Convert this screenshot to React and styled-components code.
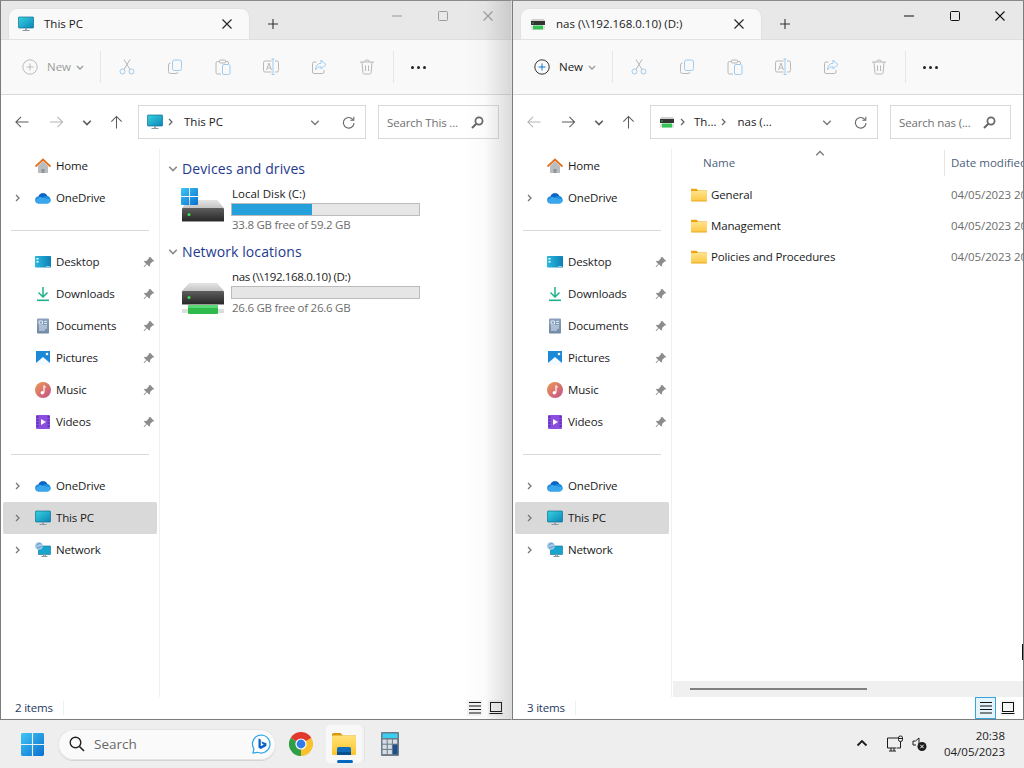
import React from "react";
import styled, { createGlobalStyle } from "styled-components";

const Global = createGlobalStyle`
  html, body { margin: 0; padding: 0; height: 768px; overflow: hidden; background: #eeeeee; }
  body { font-family: "Open Sans", "Noto Sans", "Liberation Sans", sans-serif; font-size: 11.5px; color: #1a1a1a; }
  * { box-sizing: border-box; }
`;

const Desktop = styled.div`display: flex; flex-direction: column; width: 1024px; height: 768px; overflow: hidden;`;
const Windows = styled.div`display: flex; height: 720px;`;
const WindowFrame = styled.section`
  position: relative; width: 512px; height: 720px; display: flex; flex-direction: column;
  background: #fff; border-left: 1px solid #7c7c7c; border-top: 1px solid #8a8a8a; border-bottom: 1px solid #7c7c7c;
  border-right: 1px solid ${p => (p.$active ? "#7c7c7c" : "#dcdcdc")};
  overflow: hidden;
`;
const EdgeShadow = styled.div`
  position: absolute; top: 0; right: 0; bottom: 0; width: 48px; pointer-events: none;
  background: linear-gradient(to right, rgba(120,120,120,0), rgba(120,120,120,0.03) 45%, rgba(120,120,120,0.26));
`;
const TabStrip = styled.div`display: flex; height: 39px; background: #e8e8e8; flex: none; box-shadow: inset 0 -1px 0 #dedede;`;
const Tab = styled.div`
  display: flex; align-items: center; width: 240px; height: 30px; margin: 8px 0 0 8px; padding-left: 9px;
  background: #f9f9f9; border-radius: 8px 8px 0 0; box-shadow: 0 0 0 1px #e2e2e2;
`;
const TabTitle = styled.span`margin-left: 10px; flex: 1; white-space: nowrap; padding-bottom: 1px;`;
const TabClose = styled.span`display: flex; width: 12px; margin-right: 16px; color: #222;`;
const NewTab = styled.div`display: flex; align-items: center; justify-content: center; width: 48px; height: 30px; margin-top: 8px; color: #333;`;
const Controls = styled.div`display: flex; margin-left: auto; height: 30px; color: ${p => (p.$active ? "#111" : "#9a9a9a")};`;
const Control = styled.div`display: flex; align-items: center; justify-content: center; width: 45.6px; height: 30px;`;

const Toolbar = styled.div`display: flex; align-items: center; height: 55px; flex: none; background: #f9f9f9; border-bottom: 1px solid #d9d9d9;`;
const NewButton = styled.div`
  display: flex; align-items: center; width: 99px; padding-left: 21px; height: 32px;
  color: ${p => (p.$active ? "#1a1a1a" : "#9c9c9c")};
`;
const NewLabel = styled.span`margin-left: 9px; padding-bottom: 1px;`;
const NewCaret = styled.span`display: flex; margin-left: 5px; color: #9a9a9a;`;
const ToolSep = styled.div`width: 1px; height: 32px; background: #e7e7e7; margin-right: ${p => p.$gap || 0}px; margin-left: ${p => p.$left || 0}px;`;
const ToolButton = styled.div`display: flex; align-items: center; justify-content: center; width: 48px; height: 32px;`;
const Dots = styled.div`display: flex; gap: 3px; margin-left: 17px;`;
const Dot = styled.i`width: 3px; height: 3px; background: #222; border-radius: 50%;`;

const NavRow = styled.div`display: flex; align-items: center; height: 54px; flex: none; padding-left: 4px;`;
const NavButton = styled.div`display: flex; align-items: center; justify-content: center; height: 20px; width: ${p => p.$w}px; color: ${p => (p.$off ? "#b4b4b4" : "#5a5a5a")};`;
const AddressBar = styled.div`
  display: flex; align-items: center; width: 228px; height: 34px; margin-left: 4px; padding-left: 8px;
  border: 1px solid #d9d9d9; background: #fff;
`;
const Crumb = styled.span`white-space: nowrap; color: #1a1a1a; margin-left: ${p => p.$ml || 0}px; padding-bottom: 1px;`;
const CrumbSep = styled.span`display: flex; color: #666; margin-left: ${p => p.$ml || 0}px;`;
const AddressEnd = styled.div`display: flex; align-items: center; margin-left: auto; color: #777;`;
const AddressCaret = styled.span`display: flex; margin-right: 22px; color: #777;`;
const Refresh = styled.span`display: flex; margin-right: 10px; color: #6a6a6a;`;
const SearchBox = styled.div`
  display: flex; align-items: center; justify-content: space-between; width: 121px; height: 34px; margin-left: 12px;
  padding: 0 14px 0 8px; border: 1px solid #d9d9d9; color: #707070; letter-spacing: -0.15px; white-space: nowrap;
`;
const Mag = styled.span`display: flex; color: #666;`;

const Body = styled.div`display: flex; flex: 1; min-height: 0;`;
const Sidebar = styled.nav`width: 159px; flex: none; padding: 1px 2px 0 2px; border-right: 1px solid #f0f0f0;`;
const SideRow = styled.div`
  display: flex; align-items: center; height: 32px; border-radius: 2px; width: 154px;
  background: ${p => (p.$selected ? "#d9d9d9" : "transparent")};
`;
const Expander = styled.span`display: flex; justify-content: center; width: 28px; color: #777;`;
const SideIcon = styled.span`display: flex; width: 16px; margin-left: 4px;`;
const SideLabel = styled.span`margin-left: 5px; flex: 1; letter-spacing: -0.15px; white-space: nowrap; padding-bottom: 1px;`;
const Pin = styled.span`display: flex; margin-right: 2px; color: #8c8c8c;`;
const SideSep = styled.div`height: 1px; width: 138px; margin: 16px 0 15px 8px; background: #d9d9d9;`;

const Content = styled.main`position: relative; flex: 1; min-width: 0; display: flex; flex-direction: column; overflow: hidden;`;
const GroupHead = styled.h2`
  display: flex; align-items: center; height: 20px; margin: ${p => p.$top}px 0 7px 8px; padding-bottom: 2px; font-weight: 400; font-size: 14px;
  color: #1e3a8f; letter-spacing: 0.1px;
`;
const GroupCaret = styled.span`display: flex; width: 14px; color: #8a8a8a;`;
const DriveTile = styled.div`display: flex; margin-left: 21px;`;
const DriveIcon = styled.div`position: relative; width: 51px; flex: none; padding-left: 1px; padding-top: 14px;`;
const DriveLogo = styled.div`position: absolute; left: 0; top: 2px;`;
const DriveName = styled.div`height: 16px; line-height: 16px; letter-spacing: ${p => (p.$tight ? "-0.33px" : "0")};`;
const DriveBar = styled.div`width: 189px; height: 13px; margin: 1px 0 1px -1px; background: #e6e6e6; border: 1px solid #bcbcbc;`;
const DriveFill = styled.div`height: 100%; background: #26a0da;`;
const DriveFree = styled.div`height: 16px; line-height: 16px; color: #6d6d6d; letter-spacing: -0.26px;`;

const Header = styled.div`display: grid; grid-template-columns: 273px 1fr; height: 26px; margin-top: 1px; line-height: 26px; flex: none; color: #4c607a;`;
const NameHead = styled.div`padding-left: 31px; border-right: 1px solid #e5e5e5;`;
const DateHead = styled.div`padding-left: 6px; white-space: nowrap;`;
const SortMark = styled.span`position: absolute; left: 143px; top: 0; color: #777; display: flex;`;
const FileList = styled.div`flex: 1; padding-top: 3px;`;
const FileRow = styled.div`display: grid; grid-template-columns: 273px 1fr; height: 31px; align-items: center;`;
const FileName = styled.div`display: flex; align-items: center; padding-left: 19px; letter-spacing: -0.15px;`;
const FileLabel = styled.span`margin-left: 4px;`;
const FileDate = styled.div`padding-left: 6px; color: #6d6d6d; white-space: nowrap; letter-spacing: -0.1px;`;
const HScroll = styled.div`height: 16px; margin-left: 1px; background: #f0f0f0; flex: none; padding: 7px 0 0 17px;`;
const HThumb = styled.div`width: 177px; height: 2px; background: #808080;`;

const Status = styled.footer`display: flex; align-items: center; height: 22px; flex: none; padding-left: 14px; color: #1f3a5f;`;
const StatusCount = styled.span`width: 49px; border-right: 1px solid #efefef; line-height: 14px; letter-spacing: -0.2px;`;
const ViewGroup = styled.div`display: flex; margin-left: auto; margin-right: 8px; height: 22px; gap: 6px; align-items: center;`;
const ViewButton = styled.div`
  display: flex; align-items: center; justify-content: center; width: ${p => (p.$on ? 21 : 15)}px; height: ${p => (p.$on ? 22 : 16)}px; color: #111;
  margin-right: ${p => (p.$on ? -2 : 0)}px;
  background: ${p => (p.$on ? "#e5f3fb" : "#f4f4f4")}; border: ${p => (p.$on ? "1px solid #36a5de" : "none")};
`;
const CursorMark = styled.div`position: absolute; right: 0; top: 495px; width: 1px; height: 16px; background: #111;`;

const Taskbar = styled.footer`display: flex; align-items: center; height: 48px; background: #eeeeee; padding-left: 21px;`;
const StartIcon = styled.div`display: flex; margin-right: 14px;`;
const SearchPill = styled.div`
  display: flex; align-items: center; width: 218px; height: 31px; border-radius: 16px; background: #fafafa;
  box-shadow: inset 0 0 0 1px #e4e4e4, 0 1px 0 #d4d4d4; padding: 0 5px 0 11px; font-size: 13.5px; color: #686868;
`;
const PillText = styled.span`margin-left: 9px; flex: 1; padding-bottom: 1px;`;
const AppSlot = styled.div`display: flex; align-items: center; justify-content: center; margin-left: ${p => p.$ml}px;`;
const ActiveApp = styled.div`
  position: relative; display: flex; justify-content: center; padding-top: 8px; width: 35px; height: 38px; margin-left: 13px;
  background: #f8f8f8; border-radius: 4px; box-shadow: 3px 0 0 0 #f3f3f3, 4px 0 0 0 #e2e2e2;
`;
const Indicator = styled.i`position: absolute; left: 11px; bottom: 0; width: 16px; height: 3px; border-radius: 2px; background: #0067c0;`;
const Tray = styled.div`display: flex; align-items: center; margin-left: auto; padding-right: 19px; color: #1c1c1c;`;
const TrayIcon = styled.span`display: flex; margin-right: ${p => p.$mr}px;`;
const Clock = styled.div`text-align: right; line-height: 16px; color: #1c1c1c;`;

/* ---------- icons ---------- */
const Svg = ({ s = 16, w, h, vb, children }) => (
  <svg width={w || s} height={h || s} viewBox={vb || `0 0 ${w || s} ${h || s}`} fill="none" style={{ display: "block", flex: "none" }}>{children}</svg>
);
const Chev = ({ dir = "right", s = 8, c = "currentColor", sw = 1.3 }) => {
  const d = { right: "M3 1l3 3-3 3", down: "M1 3l3 3 3-3", up: "M1 5l3-3 3 3" }[dir];
  return <Svg s={s} vb="0 0 8 8"><path d={d} stroke={c} strokeWidth={sw} /></Svg>;
};
const XIcon = ({ s = 12, sw = 1.1 }) => <Svg s={s} vb="0 0 12 12"><path d="M1.5 1.5l9 9M10.5 1.5l-9 9" stroke="currentColor" strokeWidth={sw} /></Svg>;
const PCIcon = ({ s = 16 }) => (
  <Svg s={s} vb="0 0 16 16">
    <defs><linearGradient id="pcg" x1="0" y1="0" x2="1" y2="1"><stop offset="0" stopColor="#38d2de" /><stop offset="1" stopColor="#0a86b8" /></linearGradient></defs>
    <rect x="0.5" y="1" width="15" height="11" rx="0.6" fill="url(#pcg)" stroke="#0f6f95" strokeWidth="0.7" />
    <path d="M7 12h2v2H7z" fill="#9aa7b0" /><path d="M4.5 14h7v1h-7z" fill="#8a98a2" />
  </Svg>
);
const HardDrive = ({ net }) => (
  <Svg w={42} h={net ? 31 : 22} vb={`0 0 42 ${net ? 31 : 22}`}>
    <defs>
      <linearGradient id="hdt" x1="0" y1="0" x2="0" y2="1"><stop offset="0" stopColor="#e4e4e4" /><stop offset="1" stopColor="#c4c4c4" /></linearGradient>
      <linearGradient id="hdb" x1="0" y1="0" x2="0" y2="1"><stop offset="0" stopColor="#5e5e5e" /><stop offset="1" stopColor="#252525" /></linearGradient>
    </defs>
    <path d="M7 0h28l7 8H0z" fill="url(#hdt)" />
    <rect x="0" y="8" width="42" height="14" rx="1" fill="url(#hdb)" />
    <rect y="21" width="42" height="1" fill="#9a9a9a" />
    <circle cx="7" cy="14.5" r="1.5" fill="#39e04f" />
    {net && <><rect x="0" y="26" width="42" height="4" fill="#dcdedc" /><rect x="6" y="22" width="30" height="9" rx="1" fill="#2fbb4c" /><rect x="6" y="22" width="30" height="3" fill="#5ad874" /></>}
  </Svg>
);
const NasTab = () => (
  <Svg s={16} vb="0 0 16 16">
    <path d="M2 3h12l1 2H1z" fill="#d0d0d0" /><rect x="1" y="5" width="14" height="4" fill="#333" /><circle cx="3" cy="7" r=".7" fill="#3ddc58" />
    <rect x="1" y="10" width="14" height="3.5" fill="#ddd" /><rect x="3" y="9.5" width="10" height="4" fill="#36c455" />
  </Svg>
);
const WinLogo = ({ s = 24 }) => (
  <Svg s={s} vb="0 0 24 24">
    <defs><linearGradient id="wl" x1="0" y1="0" x2="1" y2="1"><stop offset="0" stopColor="#3fc6f5" /><stop offset="1" stopColor="#0a6fcf" /></linearGradient></defs>
    <path d="M0 1.5A1.5 1.5 0 0 1 1.5 0H11.4v11.4H0zM12.6 0h9.9A1.5 1.5 0 0 1 24 1.5v9.9H12.6zM0 12.6h11.4V24H1.5A1.5 1.5 0 0 1 0 22.5zM12.6 12.6H24v9.9a1.5 1.5 0 0 1-1.5 1.5h-9.9z" fill="url(#wl)" />
  </Svg>
);
const Home = () => (<Svg><path d="M3 8v7h10V8L8 3z" fill="#b9bcc0" /><path d="M6.5 15v-4h3v4z" fill="#8f9296" /><path d="M.5 8.5L8 1.5l7.5 7" stroke="#e2701c" strokeWidth="1.8" /></Svg>);
const Cloud = () => (<Svg><path d="M4 13.5a3.5 3.5 0 0 1-.6-7 4.8 4.8 0 0 1 9-.4 3.7 3.7 0 0 1 3 3.7 3.7 3.7 0 0 1-3.4 3.7z" fill="#1f8ce0" /><path d="M3.5 8.2c2-1.6 4-1.6 6 0l6.4 1.2a3.7 3.7 0 0 1-3.5 4.1H4a3.5 3.5 0 0 1-3.3-3.5z" fill="#3aa7ec" /><path d="M3.4 6.5a4.8 4.8 0 0 1 9-.4c-2-.3-3.8.5-4.6 1.6C6.5 6.8 5 6.4 3.4 6.5z" fill="#0c64c0" /></Svg>);
const Desk = () => (<Svg><defs><linearGradient id="dk" x1="0" y1="0" x2="1" y2="0"><stop offset="0" stopColor="#29b9de" /><stop offset="1" stopColor="#0d7fb5" /></linearGradient></defs><rect y="2" width="16" height="11.5" rx=".8" fill="url(#dk)" /><path d="M1.5 4h2v1.5h-2zM1.5 7h2v1.5h-2z" fill="#fff" /><path d="M11 12.3h4v.6h-4z" fill="#d6f2fa" /></Svg>);
const Down = () => (<Svg><path d="M8 1v9.5M3.5 6.5L8 11l4.5-4.5" stroke="#20b08a" strokeWidth="1.5" /><path d="M2 14.3h12" stroke="#20b08a" strokeWidth="1.6" /></Svg>);
const Docs = () => (<Svg><defs><linearGradient id="dc" x1="0" y1="0" x2="0" y2="1"><stop offset="0" stopColor="#8aa2bd" /><stop offset="1" stopColor="#6f8aa8" /></linearGradient></defs><rect x="2" y="0.5" width="12" height="15" rx=".8" fill="url(#dc)" /><path d="M4 3h3.5v3H4zM9 3.4h3M9 5.6h3M4 8h8M4 10h8M4 12h6" stroke="#eef3f8" strokeWidth=".9" /></Svg>);
const Pics = () => (<Svg><rect x="1" y="1" width="14" height="14" fill="#1b88d8" /><path d="M1 13l7-6 7 6v2H1z" fill="#f4faff" /><circle cx="12" cy="4" r="1.3" fill="#fff" /></Svg>);
const Music = () => (<Svg><defs><linearGradient id="mu" x1="0" y1="0" x2="1" y2="1"><stop offset="0" stopColor="#ef9a52" /><stop offset="1" stopColor="#c2508a" /></linearGradient></defs><circle cx="8" cy="8" r="8" fill="url(#mu)" /><path d="M9 3.5v7.2" stroke="#fff" strokeWidth="1.2" /><circle cx="7.3" cy="10.7" r="1.7" fill="#fff" /><path d="M9 3.5c.4 1.4 1.4 1.6 2 2" stroke="#fff" strokeWidth="1" /></Svg>);
const Video = () => (<Svg><rect x="1" y="1" width="14" height="14" rx="1" fill="#8b4fe0" /><path d="M1.5 3h2M1.5 6h2M1.5 9h2M1.5 12h2M12.5 3h2M12.5 6h2M12.5 9h2M12.5 12h2" stroke="#3b1a86" strokeWidth="1" /><path d="M6 5l5 3-5 3z" fill="#fff" /></Svg>);
const Net = () => (<Svg><rect x="3.5" y="4" width="12" height="8.5" fill="#17a5cf" stroke="#0f6f95" strokeWidth=".6" /><path d="M8.5 12.5h2V14h-2zM6.5 14.5h6" stroke="#8a98a2" strokeWidth="1" /><circle cx="4" cy="4" r="3.8" fill="#9ec6e6" /><path d="M1.5 3.5c1-1.5 3-2.5 4-2M2 6c1.5-.5 3-.5 4.5-1.5" stroke="#3f7fb8" strokeWidth=".7" /></Svg>);
const PinIcon = () => (<Svg s={12} vb="0 0 12 12"><path d="M7 .8l4.2 4.2-1 .8-.8-.2L7 8.2l.1 1.5-.9.9-2.3-2.3-2.7 2.9-.6-.6L3.3 7.9 1 5.700l.9-.9 1.5.1 2.5-2.4-.2-.8z" fill="currentColor" /></Svg>);
const Folder = () => (
  <Svg w={16} h={16} vb="0 0 16 16">
    <defs><linearGradient id="fd" x1="0" y1="0" x2="0" y2="1"><stop offset="0" stopColor="#ffe28a" /><stop offset="1" stopColor="#fbc946" /></linearGradient></defs>
    <path d="M0 2.5A.8.8 0 0 1 .8 1.7h4.7L7.3 3.5H16v3H0z" fill="#eda40f" /><rect y="4" width="16" height="10" rx=".8" fill="url(#fd)" /><path d="M0 13.4h16v.4a.6.6 0 0 1-.6.6H.6a.6.6 0 0 1-.6-.6z" fill="#e9a820" />
  </Svg>
);
const bl = "#9fccf0", gr = "#b8b8b8";
const Cut = () => <Svg s={16}><circle cx="3.5" cy="12.5" r="2.5" stroke={bl} /><circle cx="12.5" cy="12.5" r="2.5" stroke={bl} /><path d="M5 10.500L11 .5M11 10.500L5 .5" stroke={gr} /></Svg>;
const CopyI = () => <Svg s={16}><rect x="5.5" y="1" width="9" height="10.5" rx="2" stroke={bl} /><path d="M3.5 4A2 2 0 0 0 1.5 6v6.5a2 2 0 0 0 2 2h5.5a2 2 0 0 0 2-1.5" stroke={gr} /></Svg>;
const Paste = () => <Svg s={16}><path d="M4.5 2.5H2.500A1.500 1.500 0 0 0 1 4v9.500A1.500 1.500 0 0 0 2.500 15H6M10.500 2.500h1.500A1.500 1.500 0 0 1 13.500 4v1" stroke={gr} /><rect x="4.5" y="1" width="6" height="3" rx="1" stroke={gr} /><rect x="7.5" y="5.5" width="7.5" height="10" rx="1.5" stroke={bl} /></Svg>;
const Rename = () => <Svg w={18} h={18} vb="0 0 18 18"><path d="M9.5 3H3a1.5 1.5 0 0 0-1.5 1.5v8A1.5 1.5 0 0 0 3 14h6.5M13 3h2a1.5 1.5 0 0 1 1.5 1.5v8A1.5 1.5 0 0 1 15 14h-2" stroke={gr} /><path d="M4.5 12l2.5-7 2.5 7M5.3 10h3.500" stroke={gr} /><path d="M9.5 1h3M11 1v15M9.5 16.500h3" stroke={bl} /></Svg>;
const Share = () => <Svg s={16}><path d="M5.5 3H3a1.5 1.5 0 0 0-1.5 1.5V13A1.5 1.5 0 0 0 3 14.5h8.500A1.500 1.500 0 0 0 13 13v-2" stroke={gr} /><path d="M10 1l5 4.500-5 4.500V7.700c-2.500 0-4.300 1-5.500 3.300 0-4 2-6.500 5.500-6.800z" stroke={bl} /></Svg>;
const Trash = () => <Svg s={16}><path d="M1 3h14M5.500 3c0-1.300.8-2 2.500-2s2.500.7 2.500 2M3 3l.9 10.700A1.500 1.500 0 0 0 5.400 15h5.200a1.500 1.500 0 0 0 1.500-1.300L13 3M6.500 6.500v5.500M9.500 6.500v5.500" stroke={gr} /></Svg>;
const Plus = ({ c, b }) => <Svg s={16}><circle cx="8" cy="8" r="7.2" stroke={c} strokeWidth="1" /><path d="M8 4.5v7M4.5 8h7" stroke={b} strokeWidth="1" /></Svg>;
const Arrow = ({ dir = "left" }) => {
  const d = { left: "M15 7.5H1.5M7 2L1.5 7.5 7 13", right: "M0.5 7.5H14M8.5 2L14 7.5 8.5 13", up: "M7.5 14.5V1.5M2 7l5.5-5.5L13 7" }[dir];
  return <Svg s={15} vb="0 0 15 16"><path d={d} stroke="currentColor" strokeWidth="1.1" /></Svg>;
};
const RefreshI = () => <Svg s={13} vb="0 0 13 13"><path d="M11.2 4A5.3 5.3 0 1 0 12 7" stroke="currentColor" strokeWidth="1.1" /><path d="M11.8 .8v3.5H8.3" stroke="currentColor" strokeWidth="1.1" /></Svg>;
const MagI = () => <Svg s={13} vb="0 0 13 13"><circle cx="8" cy="5" r="3.6" stroke="currentColor" strokeWidth="1.7" /><path d="M5.3 7.7L1 12" stroke="currentColor" strokeWidth="2" /></Svg>;
const TileI = () => <Svg s={14} vb="0 0 14 14"><rect x="1.5" y="1.5" width="11" height="9" stroke="currentColor" /><path d="M.5 12.5h13" stroke="currentColor" /></Svg>;
const ListI = () => <Svg s={14} vb="0 0 14 14"><path d="M1 1.5h12M1 5h12M1 8.5h12M1 12h12" stroke="currentColor" /></Svg>;

/* taskbar art */
const Chrome = () => (
  <Svg s={24} vb="0 0 24 24">
    <path d="M12 12L1.6 6A12 12 0 0 1 22.4 6z" fill="#e2372c" />
    <path d="M12 12L22.4 6A12 12 0 0 1 12 24z" fill="#fbc02d" />
    <path d="M12 12L12 24A12 12 0 0 1 1.6 6z" fill="#2f9e44" />
    <circle cx="12" cy="12" r="5.6" fill="#fff" /><circle cx="12" cy="12" r="4.4" fill="#2f7ce8" />
  </Svg>
);
const ExplorerArt = () => (
  <Svg w={24} h={22} vb="0 0 24 22">
    <defs><linearGradient id="ex" x1="0" y1="0" x2="0" y2="1"><stop offset="0" stopColor="#ffe27a" /><stop offset="1" stopColor="#fcc428" /></linearGradient></defs>
    <path d="M0 1.5A1.5 1.5 0 0 1 1.5 0h7l2.5 2.5h13V8H0z" fill="#d9980c" />
    <rect y="2.5" width="24" height="19.5" rx="1" fill="url(#ex)" />
    <rect x="5" y="14" width="14" height="8" rx="1.5" fill="#0f6cbd" /><rect x="5" y="19" width="14" height="3" fill="#0a4f8f" />
  </Svg>
);
const Calc = () => (
  <Svg w={18} h={24} vb="0 0 18 24">
    <rect width="18" height="24" rx="1" fill="#6b7a88" /><rect x="1.5" y="1.5" width="15" height="4.5" fill="#39d0ef" />
    {[0, 1, 2].flatMap(r => [0, 1, 2].map(c => (c === 2 && r > 0 ? null : <rect key={`${r}${c}`} x={1.5 + c * 5.2} y={7.5 + r * 5.2} width="4.2" height="4.2" fill="#d6dde3" />)))}
    <rect x="11.9" y="12.7" width="4.6" height="9.6" fill="#1d4f8c" />
  </Svg>
);
const Bing = () => (
  <Svg s={20} vb="0 0 20 20">
    <path d="M10 1a9 9 0 1 1-3.5 17.3L2 19l.9-4.2A9 9 0 0 1 10 1z" fill="#fdfdfd" stroke="#28a4e8" strokeWidth="1.2" />
    <path d="M7.5 4.5l2.3 1v6.8l3-1.7-1.5-.8-.9-2.3 5 1.8v2.6l-5.5 3.2-2.4-1.4z" fill="#0a62c8" />
  </Svg>
);
const SearchGlass = () => <Svg s={16} vb="0 0 16 16"><circle cx="6.5" cy="6.5" r="5.3" stroke="#222" strokeWidth="1.4" /><path d="M10.5 10.5l4.5 4.5" stroke="#222" strokeWidth="1.6" /></Svg>;
const NetTray = () => (
  <Svg w={18} h={18} vb="0 0 18 18">
    <path d="M13 3H1.5v10h9M3 16h7M5 13v3M8 13v3" stroke="currentColor" strokeWidth="1" />
    <rect x="12.5" y="1" width="4" height="5.5" rx="1.8" stroke="currentColor" strokeWidth="1" /><path d="M14.5 6.5V13H11M12.5 3.5h4" stroke="currentColor" strokeWidth="1" />
  </Svg>
);
const Speaker = () => (
  <Svg w={15} h={16} vb="0 0 15 16">
    <path d="M1 5h2.5L7 2v7.5M1 5v4h3" stroke="currentColor" strokeWidth="1" />
    <circle cx="10" cy="10.5" r="4.5" fill="#1c1c1c" /><path d="M8.3 8.8l3.4 3.4M11.7 8.8l-3.4 3.4" stroke="#fff" strokeWidth="1" />
  </Svg>
);

const quick = [
  ["Desktop", <Desk />], ["Downloads", <Down />], ["Documents", <Docs />],
  ["Pictures", <Pics />], ["Music", <Music />], ["Videos", <Video />],
];

const Side = () => (
  <Sidebar>
    <SideRow><Expander /><SideIcon><Home /></SideIcon><SideLabel>Home</SideLabel></SideRow>
    <SideRow><Expander><Chev /></Expander><SideIcon><Cloud /></SideIcon><SideLabel>OneDrive</SideLabel></SideRow>
    <SideSep />
    {quick.map(([n, i]) => (
      <SideRow key={n}><Expander /><SideIcon>{i}</SideIcon><SideLabel>{n}</SideLabel><Pin><PinIcon /></Pin></SideRow>
    ))}
    <SideSep />
    <SideRow><Expander><Chev /></Expander><SideIcon><Cloud /></SideIcon><SideLabel>OneDrive</SideLabel></SideRow>
    <SideRow $selected><Expander><Chev /></Expander><SideIcon><PCIcon /></SideIcon><SideLabel>This PC</SideLabel></SideRow>
    <SideRow><Expander><Chev /></Expander><SideIcon><Net /></SideIcon><SideLabel>Network</SideLabel></SideRow>
  </Sidebar>
);

const Drive = ({ name, free, pct, net }) => (
  <DriveTile>
    <DriveIcon>
      {!net && <DriveLogo><WinLogo s={17} /></DriveLogo>}
      <HardDrive net={net} />
    </DriveIcon>
    <div>
      <DriveName $tight={net}>{name}</DriveName>
      <DriveBar><DriveFill style={{ width: `${pct}%` }} /></DriveBar>
      <DriveFree>{free}</DriveFree>
    </div>
  </DriveTile>
);

const ThisPC = () => (
  <Content>
    <GroupHead $top={10}><GroupCaret><Chev dir="down" s={10} /></GroupCaret>Devices and drives</GroupHead>
    <Drive name="Local Disk (C:)" free="33.8 GB free of 59.2 GB" pct={43} />
    <GroupHead $top={9}><GroupCaret><Chev dir="down" s={10} /></GroupCaret>Network locations</GroupHead>
    <Drive net name="nas (\\192.168.0.10) (D:)" free="26.6 GB free of 26.6 GB" pct={0} />
  </Content>
);

const files = ["General", "Management", "Policies and Procedures"];
const NasList = () => (
  <Content>
    <SortMark><Chev dir="up" s={10} c="#777" sw={1} /></SortMark>
    <Header><NameHead>Name</NameHead><DateHead>Date modified</DateHead></Header>
    <FileList>
      {files.map(f => (
        <FileRow key={f}>
          <FileName><Folder /><FileLabel>{f}</FileLabel></FileName>
          <FileDate>04/05/2023 20</FileDate>
        </FileRow>
      ))}
    </FileList>
    <HScroll><HThumb /></HScroll>
    <CursorMark />
  </Content>
);

const Explorer = ({ active, tabIcon, title, address, search, count, children, listOn }) => (
  <WindowFrame $active={active}>
    <TabStrip>
      <Tab>{tabIcon}<TabTitle>{title}</TabTitle><TabClose><XIcon /></TabClose></Tab>
      <NewTab><Svg s={12} vb="0 0 12 12"><path d="M6 1v10M1 6h10" stroke="currentColor" strokeWidth="1.1" /></Svg></NewTab>
      <Controls $active={active}>
        <Control><Svg s={12} vb="0 0 12 12"><path d="M1 6h10" stroke="currentColor" /></Svg></Control>
        <Control><Svg s={12} vb="0 0 12 12"><rect x="1.5" y="1.5" width="9" height="9" rx="1" stroke="currentColor" /></Svg></Control>
        <Control><XIcon /></Control>
      </Controls>
    </TabStrip>
    <Toolbar>
      <NewButton $active={active}>
        <Plus c={active ? "#333" : "#bbb"} b={active ? "#0a78d4" : "#bbb"} />
        <NewLabel>New</NewLabel>
        <NewCaret><Chev dir="down" /></NewCaret>
      </NewButton>
      <ToolSep $gap={2} />
      <ToolButton><Cut /></ToolButton>
      <ToolButton><CopyI /></ToolButton>
      <ToolButton><Paste /></ToolButton>
      <ToolButton><Rename /></ToolButton>
      <ToolButton><Share /></ToolButton>
      <ToolButton><Trash /></ToolButton>
      <ToolSep $left={2} />
      <Dots><Dot /><Dot /><Dot /></Dots>
    </Toolbar>
    <NavRow>
      <NavButton $w={33} $off={active}><Arrow dir="left" /></NavButton>
      <NavButton $w={37} $off={!active}><Arrow dir="right" /></NavButton>
      <NavButton $w={23}><Chev dir="down" s={10} /></NavButton>
      <NavButton $w={36}><Arrow dir="up" /></NavButton>
      <AddressBar>
        {address}
        <AddressEnd>
          <AddressCaret><Chev dir="down" s={10} sw={1.1} /></AddressCaret>
          <Refresh><RefreshI /></Refresh>
        </AddressEnd>
      </AddressBar>
      <SearchBox>{search}<Mag><MagI /></Mag></SearchBox>
    </NavRow>
    <Body>
      <Side />
      {children}
    </Body>
    <Status>
      <StatusCount>{count}</StatusCount>
      <ViewGroup>
        <ViewButton $on={listOn}><ListI /></ViewButton>
        <ViewButton><TileI /></ViewButton>
      </ViewGroup>
    </Status>
    {!active && <EdgeShadow />}
  </WindowFrame>
);

export default function App() {
  return (
    <Desktop>
      <Global />
      <Windows>
        <Explorer
          tabIcon={<PCIcon />} title="This PC" search="Search This ..." count="2 items"
          address={<><PCIcon /><CrumbSep $ml={3}><Chev /></CrumbSep><Crumb $ml={10}>This PC</Crumb></>}
        >
          <ThisPC />
        </Explorer>
        <Explorer
          active listOn tabIcon={<NasTab />} title="nas (\\192.168.0.10) (D:)" search="Search nas (..." count="3 items"
          address={<><NasTab /><CrumbSep $ml={3}><Chev /></CrumbSep><Crumb $ml={8}>Th...</Crumb><CrumbSep $ml={3}><Chev /></CrumbSep><Crumb $ml={10}>nas (...</Crumb></>}
        >
          <NasList />
        </Explorer>
      </Windows>
      <Taskbar>
        <StartIcon><WinLogo s={23} /></StartIcon>
        <SearchPill><SearchGlass /><PillText>Search</PillText><Bing /></SearchPill>
        <AppSlot $ml={13}><Chrome /></AppSlot>
        <ActiveApp><ExplorerArt /><Indicator /></ActiveApp>
        <AppSlot $ml={20}><Calc /></AppSlot>
        <Tray>
          <TrayIcon $mr={18}><Chev dir="up" s={12} sw={1.2} /></TrayIcon>
          <TrayIcon $mr={8}><NetTray /></TrayIcon>
          <TrayIcon $mr={17}><Speaker /></TrayIcon>
          <Clock>20:38<br />04/05/2023</Clock>
        </Tray>
      </Taskbar>
    </Desktop>
  );
}
